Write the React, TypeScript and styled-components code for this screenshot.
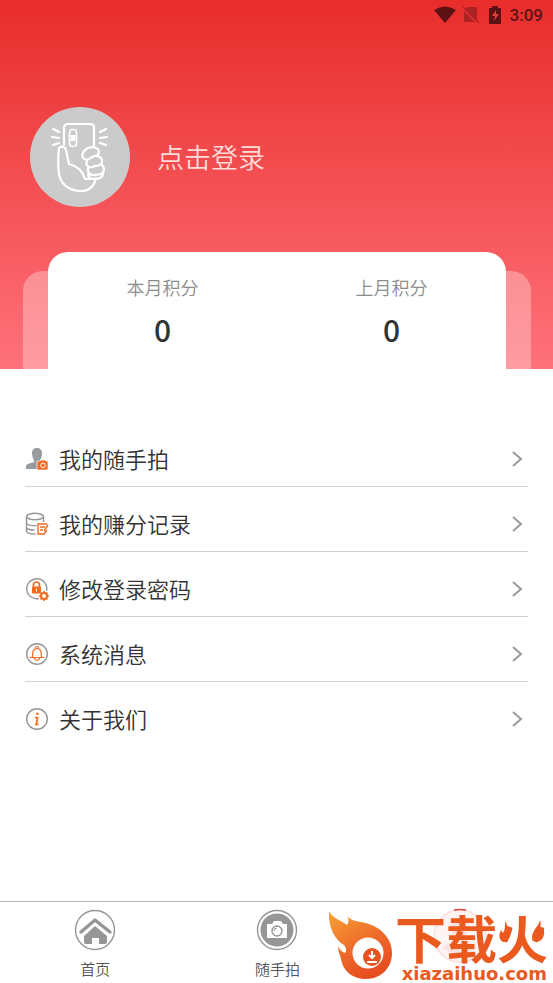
import React from "react";
import styled, { createGlobalStyle } from "styled-components";

const GlobalStyle = createGlobalStyle`
  * { box-sizing: border-box; }
  body {
    margin: 0;
    background: #fff;
    color: #333;
    font-family: "Noto Sans CJK SC", sans-serif;
  }
`;

const PlainButton = styled.button`
  display: flex;
  align-items: center;
  padding: 0;
  border: 0;
  background: none;
  color: inherit;
  font: inherit;
  cursor: pointer;
`;

const Page = styled.div`
  display: flex;
  flex-direction: column;
  min-height: 100vh;
`;

const Header = styled.header`
  display: flex;
  flex-direction: column;
  background: linear-gradient(#e82d2b, #ff727b);
`;

const StatusBar = styled.div`
  display: flex;
  justify-content: flex-end;
  align-items: center;
  height: 30px;
  padding-right: 10px;
  color: #5c1214;
  font: 500 17px/30px Roboto, sans-serif;
`;

const StatusIcons = styled.svg`
  width: 70px;
  height: 22px;
  margin-right: 6px;
`;

const Profile = styled(PlainButton)`
  align-self: flex-start;
  gap: 27px;
  margin: 77px 0 45px 30px;
  color: #ffdcd8;
  font-size: 27px;
  font-weight: 350;
  line-height: 40px;
`;

const Avatar = styled.svg`
  width: 100px;
  height: 100px;
`;

const PointsStack = styled.section`
  display: grid;
  padding: 0 22px 0 23px;
`;

const BackPanel = styled.div`
  grid-area: 1 / 1;
  margin-top: 19px;
  border-radius: 20px 20px 0 0;
  background: rgba(255, 255, 255, 0.3);
`;

const PointsCard = styled.div`
  grid-area: 1 / 1;
  display: grid;
  grid-template-columns: 1fr 1fr;
  margin: 0 25px;
  padding: 21px 0 18px;
  border-radius: 20px 20px 0 0;
  background: #fff;
`;

const Points = styled.div`
  display: flex;
  flex-direction: column;
  align-items: center;
`;

const PointsLabel = styled.span`
  font-size: 18px;
  font-weight: 350;
  line-height: 28px;
  color: #8c8c8c;
`;

const PointsValue = styled.strong`
  margin-top: 6px;
  font-size: 30px;
  line-height: 44px;
  font-weight: 500;
`;

const Menu = styled.nav`
  flex: 1;
  padding: 53px 25px 0;
`;

const MenuItem = styled(PlainButton)<{ $last?: boolean }>`
  width: 100%;
  height: 65px;
  padding: 10px 5px 0 0;
  border-bottom: 1px solid ${(p) => (p.$last ? "transparent" : "#d2d2d2")};
  text-align: left;
`;

const MenuIcon = styled.svg`
  width: 24px;
  height: 24px;
  margin-right: 10px;
  fill: none;
`;

const MenuLabel = styled.span`
  flex: 1;
  padding-bottom: 2px;
  font-size: 22px;
  font-weight: 350;
  line-height: 32px;
`;

const Chevron = styled.svg`
  width: 12px;
  height: 20px;
  fill: none;
  stroke: #999;
  stroke-width: 2;
`;

const TabBar = styled.nav`
  position: relative;
  display: grid;
  grid-template-columns: repeat(3, 1fr);
  align-items: start;
  height: 82px;
  padding: 7px 2px 0 4px;
  border-top: 1px solid #b5b5b5;
`;

const Tab = styled(PlainButton)`
  flex-direction: column;
  gap: 7px;
`;

const TabIcon = styled.svg`
  width: 42px;
  height: 42px;
`;

const TabLabel = styled.span`
  font-size: 15px;
  font-weight: 350;
  line-height: 22px;
  color: #555;
`;

const Watermark = styled.div`
  position: absolute;
  right: 4px;
  bottom: 0;
  display: flex;
  align-items: flex-end;
  color: #ea5a1e;
`;

const Flame = styled.svg`
  width: 66px;
  height: 72px;
`;

const WatermarkText = styled.div`
  position: relative;
  display: flex;
  flex-direction: column;
  align-items: flex-end;
`;

const WatermarkName = styled.span`
  padding-right: 1px;
  font-size: 51px;
  line-height: 56px;
  font-weight: 700;
`;

const WatermarkSite = styled.span`
  padding-right: 2px;
  font: bold 18px/18px "DejaVu Sans", sans-serif;
`;

const Sparks = styled.svg`
  position: absolute;
  top: 10px;
  right: 2px;
  width: 48px;
  height: 26px;
`;

const grey = "#969696";
const orange = "#f06a20";

const menu = [
  {
    label: "我的随手拍",
    icon: (
      <>
        <path fill="#969b9f" d="M7 6c0-3 2-5 5-5s5 2 5 5-1 6-2 7v2l3 1v6H1v-3c0-2 5-3 8-4v-2C8 12 7 9 7 6Z" />
        <path fill={orange} stroke="#fff" strokeWidth=".7" d="M13 14h2l1-1h4l1 1h2v9H12v-9Z" />
        <circle cx="18" cy="18.3" r="2.3" stroke="#fff" />
      </>
    ),
  },
  {
    label: "我的赚分记录",
    icon: (
      <>
        <g stroke={grey} strokeWidth="1.4">
          <ellipse cx="10" cy="4.5" rx="8.5" ry="3.2" />
          <path d="M1.500 4.500V19c0 2 4 3 9 3M18.500 4.500V10M1.500 11c1 2 5 3 10 2.500M1.500 16c1 1.500 4 2 8 2" />
        </g>
        <path stroke={orange} strokeWidth="1.4" d="M22 12h-9v10h6l3-4M15 15h5M15 18h3M19 19l4-6" />
      </>
    ),
  },
  {
    label: "修改登录密码",
    icon: (
      <>
        <path stroke={grey} strokeWidth="1.4" d="M14 21.500A10 10 0 1 1 21.500 14" />
        <rect x="7" y="9.500" width="9" height="7" rx="1" fill={orange} />
        <path stroke={orange} strokeWidth="1.700" d="M8.500 10V8a3 3 0 0 1 6 0v2" />
        <path stroke="#fff" d="M11.500 11.500v3" />
        <circle cx="19" cy="19" r="3" stroke={orange} strokeWidth="2" />
        <path stroke={orange} strokeWidth="1.600" d="M19 14v2M19 22v2M14 19h2M22 19h2M15.500 15.500l1 1M21.500 21.500l1 1M22.500 15.500l-1 1M16.500 21.500l-1 1" />
      </>
    ),
  },
  {
    label: "系统消息",
    icon: (
      <>
        <circle cx="12" cy="12" r="10.300" stroke={grey} strokeWidth="1.400" />
        <path stroke={orange} strokeWidth="1.200" d="M4.500 15.500h15M7 15.500c1-1 .5-4 1-6 .6-2 2-3 4-3s3.400 1 4 3c.5 2 0 5 1 6M10.500 6c0-2 3-2 3 0M9.500 16c.5 3 4.500 3 5 0" />
      </>
    ),
  },
  {
    label: "关于我们",
    icon: (
      <>
        <circle cx="12" cy="12" r="10.300" stroke={grey} strokeWidth="1.400" />
        <circle cx="12.500" cy="6.800" r="1.300" fill={orange} />
        <path stroke={orange} strokeWidth="1.700" d="M10 10.500h2.500l-1 6.500M10 17.500h3.500" />
      </>
    ),
  },
];

export default function App() {
  return (
    <Page>
      <GlobalStyle />
      <Header>
        <StatusBar>
          <StatusIcons viewBox="0 0 70 22" fill="currentColor">
            <path d="M0 6Q11-1 22 6L11 19Z" />
            <g opacity=".42">
              <path d="M34 3h9v14L31 5ZM30 7l11 11H30Z" />
              <path d="m29 3 16 16" stroke="currentColor" strokeWidth="1.500" />
            </g>
            <path d="M55 4h3V2h6v2h3v16H55Z" />
            <path d="M62 6l-4 6h3l-1 5 5-7h-3Z" fill="#e93a38" />
          </StatusIcons>
          3:09
        </StatusBar>
        <Profile type="button">
          <Avatar viewBox="0 0 100 100" fill="none" stroke="#fff" strokeWidth="2.200" strokeLinecap="round" strokeLinejoin="round">
            <circle cx="50" cy="50" r="50" fill="#cbcbcb" stroke="none" />
            <path d="M34 38V21q0-4 4-4h22q4 0 4 4v19" />
            <rect x="39.500" y="22.500" width="7" height="17" rx="3" strokeWidth="1.600" />
            <path d="M40.500 28h5v6h-5Z" fill="#fff" stroke="none" />
            <path d="M29 41c-1 9-1 18 0 26 2 11 11 17 22 17 7 0 13-4 15-13M29 41c1-2 6-2 7 2l3 14c8 2 14 7 16 15h10" />
            <path d="M58 41c5-2 10 0 11 3 0 3-2 5-5 5l-5 3c-5 2-8-2-6-6 1-3 3-4 5-5Z" />
            <path d="M66 49c4 0 7 3 6 6-1 3-4 4-7 4-6 3-10 0-8-5" />
            <path d="M71 57c4 3 4 8 0 10l-6 1c-6 1-9-4-6-8M73 66c0 4-3 6-8 6-6 0-8-3-6-6" />
            <path d="m23 22 6 3M22 30l7 1M23 38l6-2M76 22l-6 3M77 30l-7 1M76 38l-6-2" />
          </Avatar>
          点击登录
        </Profile>
        <PointsStack>
          <BackPanel />
          <PointsCard>
            {["本月积分", "上月积分"].map((label) => (
              <Points key={label}>
                <PointsLabel>{label}</PointsLabel>
                <PointsValue>0</PointsValue>
              </Points>
            ))}
          </PointsCard>
        </PointsStack>
      </Header>
      <Menu>
        {menu.map(({ label, icon }, i) => (
          <MenuItem type="button" key={label} $last={i === menu.length - 1}>
            <MenuIcon viewBox="0 0 24 24">{icon}</MenuIcon>
            <MenuLabel>{label}</MenuLabel>
            <Chevron viewBox="0 0 12 20"><path d="m2 3 8 7-8 7" /></Chevron>
          </MenuItem>
        ))}
      </Menu>
      <TabBar>
        <Tab type="button">
          <TabIcon viewBox="0 0 42 42">
            <circle cx="21" cy="21" r="19.500" fill="none" stroke={grey} strokeWidth="1.400" />
            <path d="m7 23 14-12 15 12" fill="none" stroke={grey} strokeWidth="3.400" strokeLinecap="round" strokeLinejoin="round" />
            <path d="m10 27 11-10 12 10v6q0 2-2 2h-6v-6h-7v6h-6q-2 0-2-2Z" fill={grey} />
          </TabIcon>
          <TabLabel>首页</TabLabel>
        </Tab>
        <Tab type="button">
          <TabIcon viewBox="0 0 42 42">
            <circle cx="21" cy="21" r="19.500" fill="none" stroke={grey} strokeWidth="1.400" />
            <circle cx="21" cy="21" r="16.500" fill={grey} />
            <path d="M11 15h5l2-3h7l2 3h4v14H11Z" fill="#fff" />
            <circle cx="21" cy="22" r="5" fill="#fff" stroke={grey} strokeWidth="1.400" />
            <path d="M18 22a3 3 0 0 1 3-3" fill="none" stroke={grey} />
          </TabIcon>
          <TabLabel>随手拍</TabLabel>
        </Tab>
        <Tab type="button" aria-label="我的">
          <TabIcon viewBox="0 0 42 42" overflow="visible">
            <circle cx="21" cy="27" r="26" fill="#fff4f4" stroke="#fbdfdf" strokeWidth="1.500" />
            <circle cx="21" cy="19" r="9" fill="#fbe0e0" />
            <path d="M4 39q17-18 34 0-17 12-34 0Z" fill="#fbe0e0" />
            <path d="M15 1q6-1 12 0" fill="none" stroke="#d8453a" strokeWidth="1.500" />
          </TabIcon>
        </Tab>
        <Watermark>
          <Flame viewBox="3 8 66 72">
            <defs>
              <linearGradient id="flame" x1="0" y1="0" x2=".5" y2="1">
                <stop offset="0" stopColor="#f6a333" />
                <stop offset=".6" stopColor="#ee6a2b" />
                <stop offset="1" stopColor="#e84e20" />
              </linearGradient>
            </defs>
            <path fill="url(#flame)" d="M3 8c4 8 10 8 18 14 2-3 2-6 0-9 5 6 13 5 22 8 15 5 23 17 23 29 0 15-11 26-26 26-14 0-23-8-25-20-1-4-3-8-3-13 2 4 4 6 7 7 2-3 1-5-1-8C8 36 2 23 3 8Z" />
            <circle cx="42" cy="50" r="15.500" fill="#fff" />
            <circle cx="46" cy="54" r="9" fill="#e95320" />
            <path d="M46 48v7m-3-3 3 3 3-3M41 59h10" fill="none" stroke="#fff" strokeWidth="2" />
          </Flame>
          <WatermarkText>
            <WatermarkName>下载火</WatermarkName>
            <WatermarkSite>xiazaihuo.com</WatermarkSite>
            <Sparks viewBox="0 0 48 26" fill="currentColor">
              <path d="M7 1c-1 5 5 8 4 15-1 5-4 7-7 7-5-3-4-8-2-12l2 3c3-4 1-8 3-13Z" />
              <path d="M41 1c2 5-1 8-1 12l4-5c3 7 0 14-6 15-6-1-6-6-3-11 2-4 5-6 6-11Z" />
            </Sparks>
          </WatermarkText>
        </Watermark>
      </TabBar>
    </Page>
  );
}
